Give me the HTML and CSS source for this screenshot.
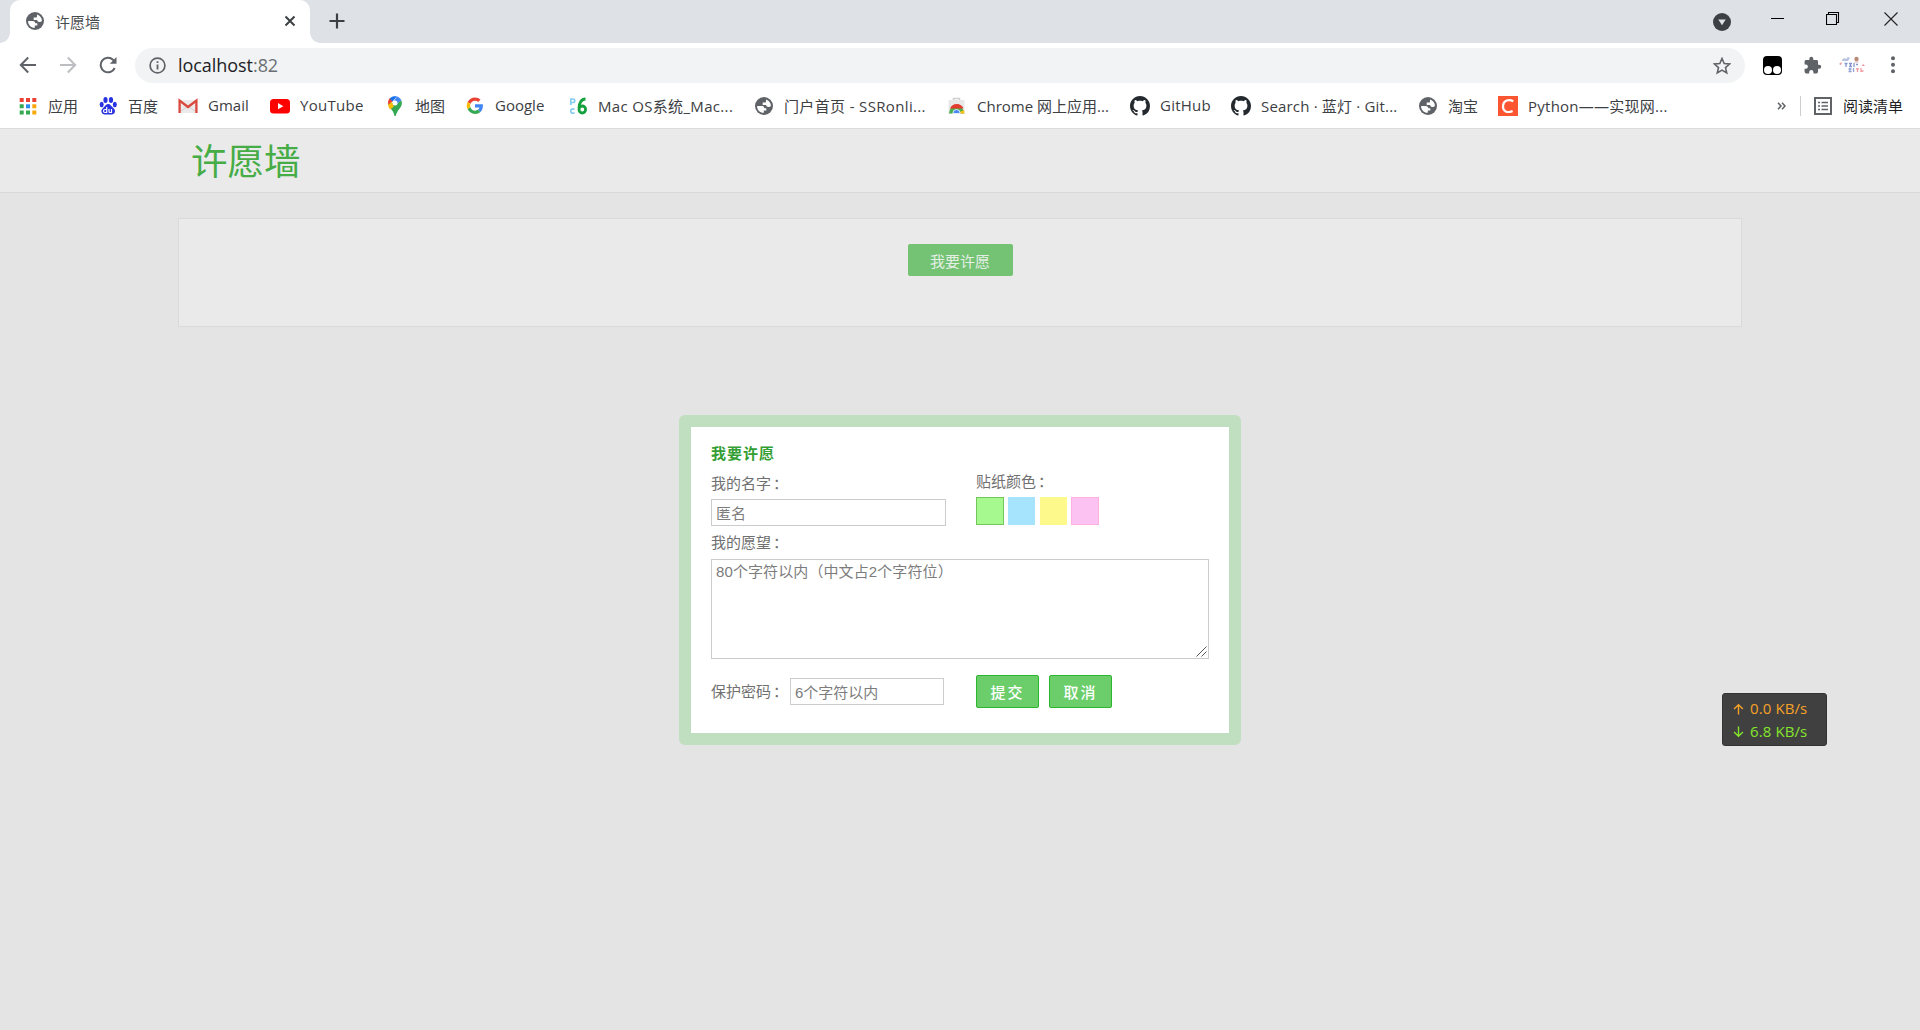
FILE: index.html
```html
<!DOCTYPE html>
<html lang="zh-CN">
<head>
<meta charset="utf-8">
<title>许愿墙</title>
<link rel="stylesheet" href="styles.css">
</head>
<body>
<svg class="defs" aria-hidden="true">
  <symbol id="globe" viewBox="0 0 18 18"><circle cx="9" cy="9" r="9" fill="#5f6368"/><path d="M2.100 9h4.700c1.700 0 2.500 1 2.500 2.300h2v2.200H8.800v2.300C5 15.900 2 12.900 2.100 9zM11 2.500c3 .9 5 3.500 4.900 6.500-.7.800-1.400 1.200-2.400 1.100-1.600 0-2.300-.7-2.300-2H7.700V5.600h2c.9 0 1.400-.5 1.300-1.500z" fill="#fff"/></symbol>
  <symbol id="github" viewBox="0 0 16 16"><path fill="#24292e" d="M8 0C3.580 0 0 3.580 0 8c0 3.540 2.290 6.530 5.470 7.590.4.070.550-.170.550-.380 0-.190-.010-.820-.010-1.490-2.010.370-2.530-.490-2.690-.940-.090-.230-.480-.940-.820-1.130-.280-.150-.680-.520-.010-.530.630-.010 1.080.580 1.230.820.720 1.210 1.870.870 2.330.660.070-.520.280-.870.510-1.070-1.780-.2-3.640-.890-3.640-3.950 0-.870.310-1.590.820-2.150-.080-.2-.360-1.020.080-2.120 0 0 .670-.210 2.200.820.640-.180 1.320-.270 2-.270s1.360.090 2 .270c1.530-1.040 2.200-.820 2.200-.820.440 1.100.160 1.920.080 2.120.510.560.820 1.270.820 2.150 0 3.070-1.870 3.750-3.650 3.950.290.250.540.730.540 1.480 0 1.070-.010 1.930-.010 2.200 0 .210.150.460.550.380A8.010 8.010 0 0 0 16 8c0-4.420-3.580-8-8-8z"/></symbol>
</svg>

<div class="browser">
  <div class="tabstrip">
    <div class="tab">
      <svg class="i18"><use href="#globe"/></svg>
      <span class="tab-title">许愿墙</span>
      <svg class="tab-close" viewBox="0 0 12 12"><path d="M1.500 1.500l9 9m0-9l-9 9" stroke="#3c4043" stroke-width="2"/></svg>
    </div>
    <svg class="newtab" viewBox="0 0 16 16"><path d="M8 .5v15M.5 8h15" stroke="#3c4043" stroke-width="2.200"/></svg>
    <div class="window-controls">
      <svg class="i18 tabsearch" viewBox="0 0 18 18"><circle cx="9" cy="9" r="9" fill="#3c4043"/><path d="M5.300 6.500h7.400L9 12.300z" fill="#dee1e6"/></svg>
      <svg class="win min" viewBox="0 0 14 14" shape-rendering="crispEdges"><path d="M.5 6.500h13" stroke="#000"/></svg>
      <svg class="win max" viewBox="0 0 14 14"><path d="M.5 2.500h10v10H.5zM2.500 2.500v-2h10v10h-2" fill="none" stroke="#000" stroke-width="1.100"/></svg>
      <svg class="win cls" viewBox="0 0 14 14"><path d="M.5.5l13 13m0-13l-13 13" stroke="#222" stroke-width="1.100"/></svg>
    </div>
  </div>

  <div class="toolbar">
    <svg class="nav back" viewBox="0 0 18 18"><path d="M17 9H2M9.200 1.500L1.800 9l7.400 7.500" fill="none" stroke="#5f6368" stroke-width="2"/></svg>
    <svg class="nav" viewBox="0 0 18 18"><path d="M1 9h15M8.800 1.500L16.200 9l-7.400 7.500" fill="none" stroke="#bcbec1" stroke-width="2"/></svg>
    <svg class="nav" viewBox="0 0 18 18"><path d="M15.700 12A7.300 7.300 0 1 1 14 3.700L16 6" fill="none" stroke="#5f6368" stroke-width="2"/><path d="M17.500 1v6.700h-6.700z" fill="#5f6368"/></svg>
    <div class="omnibox">
      <svg class="info" viewBox="0 0 17 17"><circle cx="8.500" cy="8.500" r="7.400" fill="none" stroke="#5f6368" stroke-width="1.700"/><path d="M8.500 7.500v5M8.500 4.300v1.800" stroke="#5f6368" stroke-width="1.800"/></svg>
      <span class="url">localhost<span class="port">:82</span></span>
      <svg class="star" viewBox="0 0 18 18"><path d="M9 1.500l2.200 5 5.400.5-4.100 3.600 1.200 5.300L9 13.100l-4.700 2.800 1.200-5.300L1.400 7l5.400-.5z" fill="none" stroke="#5f6368" stroke-width="1.600"/></svg>
    </div>
    <svg class="ext monkey" viewBox="0 0 19 19"><rect width="19" height="19" rx="4" fill="#000"/><circle cx="5" cy="14" r="4" fill="#fff"/><circle cx="14" cy="14" r="4" fill="#fff"/></svg>
    <svg class="ext puzzle" viewBox="0 0 24 24"><path fill="#5f6368" d="M20.500 11H19V7c0-1.100-.9-2-2-2h-4V3.500a2.500 2.500 0 0 0-5 0V5H4c-1.100 0-2 .9-2 2v3.800h1.500a2.700 2.700 0 0 1 0 5.400H2V20c0 1.100.9 2 2 2h3.800v-1.500a2.700 2.700 0 0 1 5.400 0V22H17c1.100 0 2-.9 2-2v-4h1.500a2.500 2.500 0 0 0 0-5z"/></svg>
    <svg class="avatar" viewBox="0 0 26 18"><path d="M3 4l2-2 2 1 2-2 2 1-2 3H3z" fill="#b9c2df"/><circle cx="17.500" cy="3" r="2.200" fill="#b98a78"/><path d="M15.500 6h4" stroke="#d9a9a0"/><path d="M0 8l3-2-1 3zM24 8l2 2h-3z" fill="#e58b91"/><path d="M5.500 7.500h3M7 7v4M10 7.500h3M10 10.500h3M11.500 7v4M15 7v4M17 8.500h2" stroke="#8496cd" stroke-width="1.300" fill="none"/><path d="M9.500 13h3M9.500 15.500h3M11 12v4M14.500 12v4" stroke="#93a3d4" stroke-width="1.300"/><path d="M17 12.800h3M18.500 12v4M22 12v4M22 15h2.500" stroke="#ee9ba1" stroke-width="1.300"/></svg>
    <svg class="menu" viewBox="0 0 4 18"><g fill="#5f6368"><circle cx="2" cy="2.200" r="2"/><circle cx="2" cy="8.700" r="2"/><circle cx="2" cy="15.200" r="2"/></g></svg>
  </div>

  <div class="bookmarks">
    <div class="links">
      <a class="bm"><svg viewBox="0 0 20 20"><g fill="#ea4335"><path d="M1.700 2h4v4h-4zM8 2h4v4H8zM14.300 2h4v4h-4z"/></g><g fill="#34a853"><path d="M1.700 8.300h4v4h-4zM1.700 14.500h4v4h-4z"/></g><path fill="#2a8cf0" d="M8 8.300h4v4H8z"/><path fill="#34a853" d="M8 14.500h4v4H8z"/><path fill="#fba70c" d="M14.300 8.300h4v4h-4zM14.300 14.500h4v4h-4z"/></svg><span>应用</span></a>
      <a class="bm"><svg viewBox="0 0 20 20"><g fill="#2932e1"><ellipse cx="7.500" cy="4" rx="2.100" ry="2.900"/><ellipse cx="13" cy="4" rx="2.100" ry="2.900"/><ellipse cx="3.700" cy="8.500" rx="2" ry="2.700"/><ellipse cx="16.800" cy="8.500" rx="2" ry="2.700"/><path d="M10.200 8c2 0 3 2 4.600 3.500 1.900 1.700 2.600 3 2 4.700-.8 2.400-3 2.500-6.600 2.200-3.600.3-5.800.2-6.600-2.200-.6-1.700.1-3 2-4.700C7.200 10 8.200 8 10.200 8z"/></g><path d="M8.700 11v5.500H7a1.500 1.500 0 0 1 0-3h1.700M11 13v2.500q0 1 1 1h1.500V13" fill="none" stroke="#fff" stroke-width="1.200"/></svg><span>百度</span></a>
      <a class="bm"><svg viewBox="0 0 20 20"><path d="M1 4h18v13H1z" fill="#eceaea"/><path d="M3 15l7-5 7 5" fill="none" stroke="#d0cece"/><path d="M1.600 17V4.600L10 11l8.400-6.400V17" fill="none" stroke="#d9483b" stroke-width="2.300"/></svg><span>Gmail</span></a>
      <a class="bm"><svg viewBox="0 0 20 20"><rect y="3" width="20" height="14.500" rx="3.500" fill="#f00"/><path d="M8 7.100l5.300 3.100L8 13.300z" fill="#fff"/></svg><span class="youtube">YouTube</span></a>
      <a class="bm"><svg viewBox="0 0 20 20"><path d="M10 20C9.300 17 8.400 15 6.800 13 4.800 10.500 3 9.200 3 6.700h7z" fill="#34a853"/><path d="M3.300 8.800C2.500 6 3.300 3.500 5 2l3 3z" fill="#ea4335"/><path d="M4.700 2.500C7 0 10 0 12 .5L7.500 5.500z" fill="#1a73e8"/><path d="M12 .5c2 .7 3.500 1.900 4.300 3.800L11 9 9 5z" fill="#4285f4"/><path d="M3.300 8.500L7 6l2 5-4 2.500C4 12 3.200 10.500 3.300 8.500z" fill="#fbbc04"/><path d="M16.300 4.200c1.500 3.200.2 6-2 8.800-1.600 2-2.900 4-3.600 7H9.500C9 16 7 14.500 6 13z" fill="#34a853"/><circle cx="10" cy="7" r="2.500" fill="#fff"/></svg><span>地图</span></a>
      <a class="bm"><svg viewBox="-5 -4 58 58"><path fill="#EA4335" d="M24 9.500c3.540 0 6.710 1.220 9.210 3.600l6.850-6.850C35.900 2.380 30.470 0 24 0 14.620 0 6.510 5.380 2.560 13.220l7.980 6.190C12.430 13.720 17.740 9.500 24 9.500z"/><path fill="#4285F4" d="M46.980 24.550c0-1.570-.15-3.090-.38-4.550H24v9.020h12.940c-.58 2.960-2.260 5.480-4.780 7.180l7.730 6c4.510-4.180 7.090-10.360 7.090-17.650z"/><path fill="#FBBC05" d="M10.530 28.590c-.48-1.450-.76-2.990-.76-4.590s.27-3.140.76-4.590l-7.980-6.190C.92 16.460 0 20.120 0 24c0 3.880.92 7.540 2.560 10.780l7.970-6.190z"/><path fill="#34A853" d="M24 48c6.480 0 11.930-2.130 15.890-5.810l-7.730-6c-2.150 1.450-4.920 2.300-8.160 2.300-6.260 0-11.570-4.220-13.470-9.910l-7.980 6.190C6.510 42.620 14.620 48 24 48z"/></svg><span>Google</span></a>
      <a class="bm"><svg viewBox="0 0 20 20"><g fill="none"><path d="M2.800 9V3H5a1.700 1.700 0 0 1 0 3.500H3M6.500 13.500a2.200 2.200 0 1 0 0 3" stroke="#86cdf0" stroke-width="1.700"/><path d="M17.500 3c-4 0-6.500 4-6.500 9" stroke="#14a03c" stroke-width="2.800"/><ellipse cx="14.300" cy="13.500" rx="3.300" ry="3.500" stroke="#14a03c" stroke-width="2.800"/></g></svg><span class="mac">Mac OS系统_Mac...</span></a>
      <a class="bm"><svg viewBox="0 0 20 20"><use href="#globe" x="1" y="1" width="18" height="18"/></svg><span class="ssr">门户首页 - SSRonli...</span></a>
      <a class="bm"><svg viewBox="0 0 20 20"><path d="M6.500 5V2.500h6V5" fill="none" stroke="#cfcfcf" stroke-width="1.500"/><path d="M1.500 4h16v14h-16z" fill="#e8e8e8"/><path d="M2 17.500a7.500 8 0 0 1 15 0z" fill="#4caf50"/><path d="M9.500 17.500l7.700-3.500.3 3.500z" fill="#fbc116"/><path d="M3 12.500a7.300 7.300 0 0 1 13.500 0z" fill="#e33b2e"/><path d="M5.800 17.500a3.700 4 0 0 1 7.400 0z" fill="#4a8af4" stroke="#fff" stroke-width=".8"/></svg><span>Chrome 网上应用...</span></a>
      <a class="bm"><svg><use href="#github"/></svg><span class="gh">GitHub</span></a>
      <a class="bm"><svg><use href="#github"/></svg><span class="search">Search · 蓝灯 · Git...</span></a>
      <a class="bm"><svg viewBox="0 0 20 20"><use href="#globe" x="1" y="1" width="18" height="18"/></svg><span>淘宝</span></a>
      <a class="bm"><svg viewBox="0 0 20 20"><path d="M0 0h20v20H0z" fill="#fc5531"/><path d="M15.300 5.300C11 2.800 5.500 4.200 5 9.800c-.4 5.600 4.500 7.600 9.600 5.100" fill="none" stroke="#fff" stroke-width="2.200"/></svg><span class="py">Python——实现网...</span></a>
    </div>
    <svg class="more" viewBox="0 0 9 8"><path d="M1 .8L4 4 1 7.200M5 .8L8 4 5 7.200" fill="none" stroke="#5f6368" stroke-width="1.500"/></svg>
    <div class="reading">
      <svg class="i18" viewBox="0 0 18 18"><path d="M1 1h16v16H1z" fill="none" stroke="#5f6368" stroke-width="2"/><path d="M4 5.500h2M4 9h2M4 12.500h2M7.500 5.500H14M7.500 9H14M7.500 12.500H14" stroke="#5f6368" stroke-width="1.500"/></svg>
      <span>阅读清单</span>
    </div>
  </div>
</div>

<main class="page">
  <header class="site-header"><h1>许愿墙</h1></header>
  <section class="wall"><button class="wish-btn">我要许愿</button></section>
</main>

<form class="dialog">
  <h2>我要许愿</h2>
  <div class="row">
    <label class="name-field">我的名字<span class="colon">：</span><input class="field" value="匿名"></label>
    <div class="colors">贴纸颜色<span class="colon">：</span>
      <div class="swatches"><i class="sw green"></i><i class="sw blue"></i><i class="sw yellow"></i><i class="sw pink"></i></div>
    </div>
  </div>
  <label class="wish-field">我的愿望<span class="colon">：</span><textarea class="field">80个字符以内（中文占2个字符位）</textarea>
    <svg class="grip" viewBox="0 0 11 11"><path d="M.5 10.500l10-10M5.500 10.500l5-5" stroke="#555"/></svg>
  </label>
  <div class="row actions">
    <label class="pw-field"><span class="pw-label">保护密码<span class="colon">：</span></span><input class="field" value="6个字符以内"></label>
    <div class="buttons"><button type="button">提交</button><button type="button">取消</button></div>
  </div>
</form>

<aside class="netspeed">
  <div class="up"><svg viewBox="0 0 12 12"><path d="M6 12V1.500M1.200 6L6 1.300 10.800 6" fill="none" stroke="currentColor" stroke-width="1.500"/></svg><span>0.0 KB/s</span></div>
  <div class="down"><svg viewBox="0 0 12 12"><path d="M6 0v10.500M1.200 6L6 10.700 10.800 6" fill="none" stroke="currentColor" stroke-width="1.500"/></svg><span>6.8 KB/s</span></div>
</aside>
</body>
</html>
```
FILE: styles.css
```css
* { box-sizing: border-box; }
body { margin: 0; width: 1920px; height: 1030px; overflow: hidden; display: flex; flex-direction: column; background: #e4e4e4; font-family: "Open Sans", "Noto Sans CJK SC", sans-serif; }
svg { display: block; flex: none; }
.defs { position: absolute; width: 0; height: 0; }
.i18 { width: 18px; height: 18px; }

.browser { flex: none; height: 129px; background: #fff; border-bottom: 1px solid #d9dbdd; }
.tabstrip { height: 43px; background: #dee1e6; display: flex; padding-left: 10px; }
.tab { position: relative; width: 300px; height: 43px; background: #fff; border-radius: 10px 10px 0 0; display: flex; align-items: center; padding: 0 14px 1px 16px; }
.tab::before, .tab::after { content: ""; position: absolute; bottom: 0; width: 10px; height: 10px; }
.tab::before { left: -10px; background: radial-gradient(circle at 0 0, transparent 9.500px, #fff 10px); }
.tab::after { right: -10px; background: radial-gradient(circle at 100% 0, transparent 9.500px, #fff 10px); }
.tab-title { margin: 2px auto 0 11px; font-size: 15px; line-height: 20px; color: #4a4d50; }
.tab-close { width: 12px; height: 12px; }
.newtab { width: 16px; height: 16px; margin: 13px 0 0 19px; }
.window-controls { display: flex; margin-left: auto; align-items: flex-start; }
.tabsearch { margin: 13px 39px 0 0; }
.win { width: 14px; height: 14px; margin-top: 12px; }
.max { margin-left: 42px; }
.cls { margin: 12px 22px 0 44px; }

.toolbar { height: 44px; display: flex; align-items: center; }
.nav { width: 18px; height: 18px; margin-right: 22px; }
.back { margin-left: 19px; }
.omnibox { width: 1610px; height: 35px; margin: 1px 0 0 -4px; border-radius: 18px; background: #f1f3f4; display: flex; align-items: center; padding: 0 14px; }
.info { width: 17px; height: 17px; }
.url { margin: 0 auto 1px 12px; font-size: 18px; color: #202124; letter-spacing: -.05px; }
.port { color: #6b6f73; }
.star { width: 18px; height: 18px; }
.ext { width: 19px; height: 19px; }
.monkey { margin-left: 18px; }
.puzzle { margin-left: 21px; }
.avatar { width: 26px; height: 18px; margin-left: 17px; }
.menu { width: 4px; height: 18px; margin-left: 26px; }

.bookmarks { height: 41px; display: flex; align-items: center; padding: 0 17px 3px 18px; font-size: 15px; color: #3c4043; }
.links { flex: 1; display: grid; grid-template-columns: 80px 80px 92px 115px 80px 103px 186px 193px 183px 101px 187px 80px 180px; }
.bm { display: flex; align-items: center; gap: 10px; white-space: nowrap; }
.bm span, .reading span { margin-top: -2px; }
.bm svg { width: 20px; height: 20px; }
.youtube { letter-spacing: .3px; }
.mac { letter-spacing: .33px; }
.ssr { letter-spacing: .35px; }
.gh { letter-spacing: .25px; }
.search { letter-spacing: .18px; }
.py { letter-spacing: .25px; }
.more { width: 9px; height: 8px; margin-right: 14px; }
.reading { display: flex; align-items: center; gap: 11px; height: 20px; border-left: 1px solid #ccced1; padding-left: 13px; color: #202124; }

.page { flex: 1; }
.site-header { height: 64px; background: #eaeaea; border-bottom: 1px solid #d9d9d9; padding-left: 191px; }
h1 { margin: 0; font: 400 36.5px/62px "Noto Sans CJK SC", sans-serif; color: #46ac46; }
.wall { width: 1564px; height: 109px; margin: 25px auto 0; background: #eaeaea; border: 1px solid #dadada; padding-top: 25px; }
.wish-btn { display: block; width: 105px; height: 32px; margin: 0 auto; padding: 0; border: 0; border-radius: 2px; background: #74c274; color: #e4efe4; font: 400 15px/31px "Noto Sans CJK SC", sans-serif; }

.dialog { position: absolute; left: 679px; top: 415px; width: 562px; height: 330px; border: 12px solid #c0dfc0; border-radius: 6px; background: #fff; background-clip: padding-box; padding: 17px 20px; color: #707070; font: 400 15px/20px "Liberation Sans", "Noto Sans CJK SC", sans-serif; }
h2 { margin: 0 0 10px; font-size: 15px; line-height: 20px; letter-spacing: 1px; color: #339e33; font-weight: 700; }
.row { display: flex; }
.name-field { width: 265px; }
.name-field, .wish-field { display: block; }
.colon { margin-left: 2px; }
.field { display: block; border: 1px solid #ccc; padding: 0 4px 1px; color: #7c7c7c; font: inherit; outline: 0; background: #fff; border-radius: 0; }
.name-field .field { width: 235px; height: 27px; margin-top: 5px; }
.colors { margin-top: -2px; }
.swatches { display: flex; gap: 4px; margin-top: 5px; }
.sw { width: 28px; height: 28px; border: 1px solid; }
.green { background: #a6f98e; border-color: #74c659; }
.blue { width: 27px; background: #a6e3fd; border-color: #a6e3fd; }
.yellow { width: 27px; margin-left: 1px; background: #fdfa8b; border-color: #fdfa8b; }
.pink { background: #fcc3f2; border-color: #ffb0e0; }
.wish-field { position: relative; margin-top: 7px; }
.wish-field .field { width: 498px; height: 100px; margin-top: 6px; padding-top: 2px; resize: none; letter-spacing: .1px; }
.grip { position: absolute; right: 2px; bottom: 2px; width: 11px; height: 11px; }
.actions { margin-top: 16px; }
.pw-field { width: 265px; display: flex; align-items: center; }
.pw-label { width: 79px; white-space: nowrap; }
.pw-field .field { width: 154px; height: 27px; }
.buttons { display: flex; gap: 10px; }
.buttons button { width: 63px; height: 33px; padding: 0; border: 1px solid #2db52d; border-radius: 2px; background: #6bce6b; color: #fff; font: 500 15px/30px "Noto Sans CJK SC", sans-serif; letter-spacing: 2px; }

.netspeed { position: absolute; left: 1722px; top: 693px; width: 105px; height: 53px; background: #404040; border: 1px solid #333; border-radius: 3px; padding: 3px 0 0 10px; font-size: 15px; line-height: 23px; letter-spacing: .1px; }
.netspeed div { display: flex; align-items: center; gap: 6px; }
.netspeed svg { width: 11px; height: 12px; }
.up { color: #f5a128; }
.down { color: #84e62c; }
```
